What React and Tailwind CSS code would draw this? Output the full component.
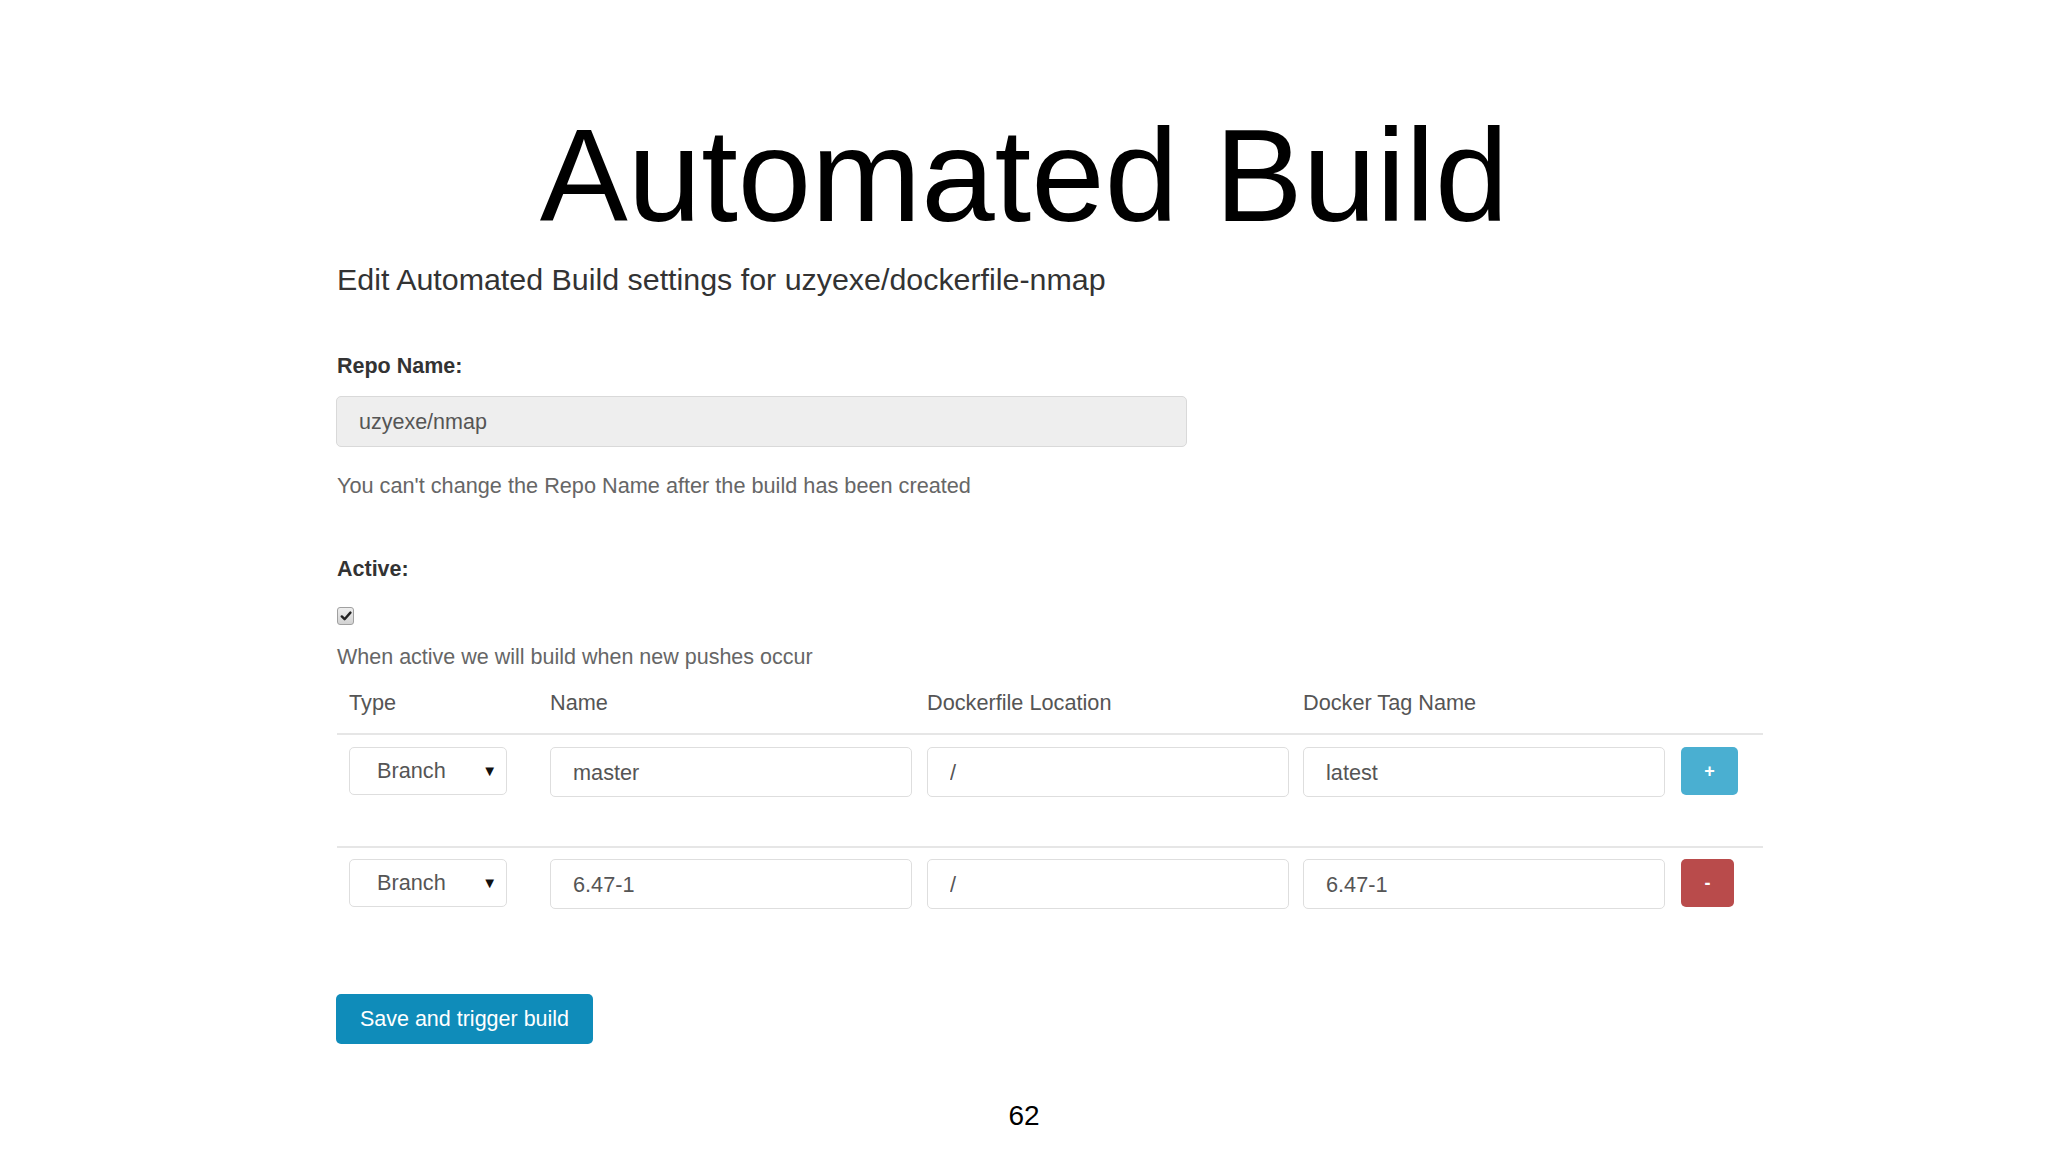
import React from 'react';

const rows = [
  { type: 'Branch', name: 'master', location: '/', tag: 'latest', action: 'add' },
  { type: 'Branch', name: '6.47-1', location: '/', tag: '6.47-1', action: 'remove' },
];

const TypeSelect = ({ value }) => (
  <div className="flex h-[48px] w-[158px] items-center justify-between rounded-[5px] border border-[#dedede] bg-white pl-[27px] pr-[9px] text-[21.7px] text-[#555]">
    <span>{value}</span>
    <span className="text-[15px] text-[#111]">▼</span>
  </div>
);

const TextField = ({ value }) => (
  <input
    readOnly
    defaultValue={value}
    className="h-[50px] w-[362px] rounded-[5px] border border-[#dedede] bg-white px-[22px] pt-px text-[21.7px] text-[#555] outline-none"
  />
);

const App = () => {
  return (
    <div className="min-h-[1152px] w-full bg-white font-['Liberation_Sans',Arial,sans-serif]">
      <h1 className="pt-[110px] text-center text-[132px] font-normal leading-none text-black">
        Automated Build
      </h1>

      <div className="ml-[337px] w-[1426px]">
        <p className="mt-[19px] text-[30.4px] leading-[36px] text-[#333]">
          Edit Automated Build settings for uzyexe/dockerfile-nmap
        </p>

        {/* Repo name */}
        <label className="mt-[54px] block text-[21.5px] font-bold leading-[30px] text-[#333]">
          Repo Name:
        </label>
        <div className="-ml-px mt-[15px] flex h-[51px] w-[851px] items-center rounded-[5px] border border-[#d9d9d9] bg-[#eeeeee] px-[22px] pt-px text-[21.5px] text-[#555]">
          uzyexe/nmap
        </div>
        <p className="mt-[24px] text-[21.7px] leading-[30px] text-[#666]">
          You can't change the Repo Name after the build has been created
        </p>

        {/* Active */}
        <label className="mt-[53px] block text-[21.5px] font-bold leading-[30px] text-[#333]">
          Active:
        </label>
        <div className="mt-[23px] flex h-[18px] w-[17px] items-center justify-center rounded-[3px] border border-[#a0a0a0] bg-gradient-to-b from-[#eeeeee] to-[#d2d2d2]">
          <svg viewBox="0 0 12 12" className="h-[12px] w-[12px]">
            <path d="M1.8 6.4 L4.6 9.2 L10.4 2.6" fill="none" stroke="#222" strokeWidth="2.4" strokeLinecap="round" strokeLinejoin="round" />
          </svg>
        </div>
        <p className="mt-[17px] text-[21.5px] leading-[30px] text-[#666]">
          When active we will build when new pushes occur
        </p>

        {/* Build tags table */}
        <div className="mt-[16px]">
          <div className="grid grid-cols-[201px_377px_376px_377px_95px] border-b-2 border-[#e6e6e6] pb-[15px] text-[21.7px] leading-[30px] text-[#555]">
            <div className="pl-[12px]">Type</div>
            <div className="pl-[12px]">Name</div>
            <div className="pl-[12px]">Dockerfile Location</div>
            <div className="pl-[12px]">Docker Tag Name</div>
            <div />
          </div>

          {rows.map((row, i) => (
            <div
              key={i}
              className={
                i === 0
                  ? 'grid grid-cols-[201px_377px_376px_377px_95px] pb-[49px] pt-[12px]'
                  : 'grid grid-cols-[201px_377px_376px_377px_95px] border-t-2 border-[#e6e6e6] pb-[49px] pt-[11px]'
              }
            >
              <div className="pl-[12px]">
                <TypeSelect value={row.type} />
              </div>
              <div className="pl-[12px]">
                <TextField value={row.name} />
              </div>
              <div className="pl-[12px]">
                <TextField value={row.location} />
              </div>
              <div className="pl-[12px]">
                <TextField value={row.tag} />
              </div>
              <div className="pl-[13px]">
                {row.action === 'add' ? (
                  <button className="flex h-[48px] w-[57px] items-center justify-center rounded-[5px] bg-[#4aafd1] text-[18px] font-bold text-white">
                    +
                  </button>
                ) : (
                  <button className="flex h-[48px] w-[53px] items-center justify-center rounded-[5px] bg-[#b94b4b] text-[18px] font-bold text-white">
                    -
                  </button>
                )}
              </div>
            </div>
          ))}
        </div>

        <button className="-ml-px mt-[36px] h-[50px] w-[257px] rounded-[5px] bg-[#0f8cba] text-[21.5px] text-white">
          Save and trigger build
        </button>
      </div>

      <div className="mt-[56px] text-center text-[28px] leading-[32px] text-black">62</div>
    </div>
  );
};

export default App;
